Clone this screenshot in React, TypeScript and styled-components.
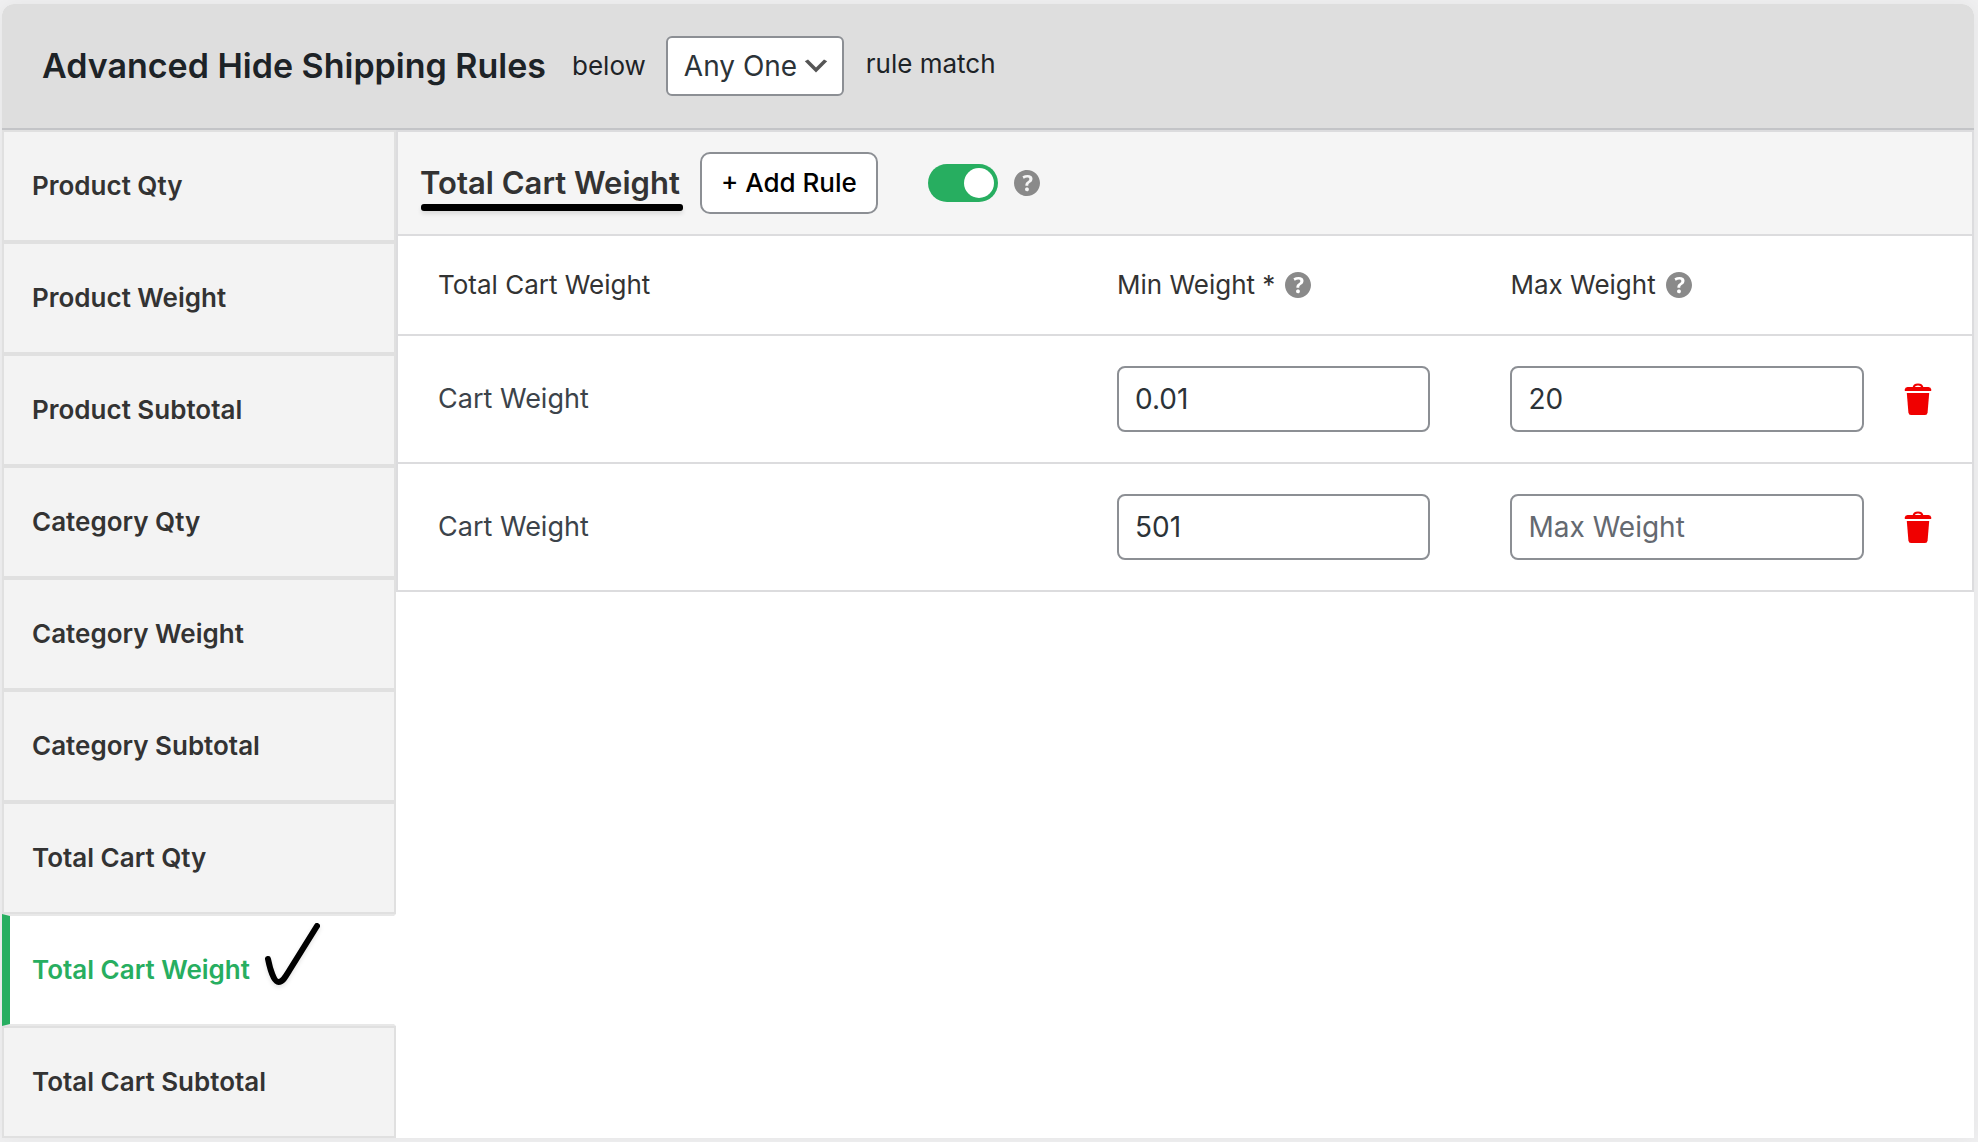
import React, { useState } from "react";
import styled, { createGlobalStyle, css } from "styled-components";

const color = {
  text: "#333333",
  ink: "#1d2327",
  field: "#2c3338",
  line: "#dcdcde",
  tabLine: "#e0e0e0",
  control: "#8c8f94",
  green: "#27ae60",
  red: "#f00000",
};

const GlobalStyle = createGlobalStyle`
  *, *::before, *::after { box-sizing: border-box; }
  body {
    margin: 0;
    background: #f0f0f1;
    color: ${color.text};
    font-family: Inter, "Liberation Sans", sans-serif;
    font-size: 26px;
    line-height: 36px;
  }
  button, input, select { font: inherit; margin: 0; }
`;

const Card = styled.section`
  margin: 4px 4px 4px 2px;
  background: #ffffff;
  border-radius: 12px 12px 0 0;
  box-shadow: 0 0 20px rgba(0, 0, 0, 0.05);
`;

const CardHeader = styled.header`
  display: flex;
  align-items: center;
  padding: 32px 40px;
  background: #dedede;
  border-bottom: 2px solid #c3c4c7;
  border-radius: 12px 12px 0 0;
  color: ${color.ink};
`;

const CardTitle = styled.h2`
  margin: 0 26px 0 0;
  font-size: 34px;
  font-weight: 600;
  line-height: 48px;
`;

const MatchGroup = styled.div`
  display: flex;
  align-items: flex-start;
  margin-left: 20px;
  gap: 22px;
  line-height: 56px;
`;

const SelectBox = styled.div`
  position: relative;
`;

const Select = styled.select`
  display: block;
  appearance: none;
  width: 178px;
  height: 60px;
  padding: 0 42px 0 16px;
  border: 2px solid ${color.control};
  border-radius: 6px;
  background: #ffffff;
  color: ${color.field};
  font-size: 28px;
`;

const Chevron = styled.svg`
  position: absolute;
  top: 14px;
  right: 12px;
  width: 32px;
  height: 32px;
  fill: #555555;
  pointer-events: none;
`;

const Body = styled.div`
  display: flex;
  align-items: flex-start;
`;

const Tabs = styled.nav`
  flex: 0 0 394px;
  display: flex;
  flex-direction: column;
`;

const Tab = styled.a<{ $active: boolean }>`
  position: relative;
  display: flex;
  align-items: center;
  height: 112px;
  padding-left: 28px;
  border: 2px solid ${color.tabLine};
  background: #f3f3f3;
  color: ${color.text};
  font-weight: 600;
  text-decoration: none;
  ${(p) =>
    p.$active &&
    css`
      padding-left: 22px;
      border-color: #e8e8e8;
      border-left: 8px solid ${color.green};
      border-right-color: #ffffff;
      background: #ffffff;
      color: ${color.green};
    `}
`;

const TabLabel = styled.span`
  position: relative;
`;

const Tick = styled.svg`
  position: absolute;
  left: calc(100% + 14px);
  bottom: 3px;
  width: 56px;
  height: 64px;
  fill: none;
  stroke: #000000;
  stroke-width: 6;
  stroke-linecap: round;
  stroke-linejoin: round;
  filter: drop-shadow(0 2px 2px rgba(0, 0, 0, 0.12));
`;

const Panel = styled.div`
  flex: 1;
  min-width: 0;
  border: 2px solid ${color.line};
`;

const PanelHeader = styled.div`
  display: flex;
  align-items: center;
  padding: 20px 22px;
  background: #f5f5f5;
  border-bottom: 2px solid ${color.line};
`;

const PanelTitle = styled.h3`
  position: relative;
  margin: 0 20px 0 0;
  font-size: 31px;
  font-weight: 600;
  line-height: 40px;

  &::after {
    content: "";
    position: absolute;
    left: 1px;
    right: -3px;
    bottom: -8px;
    height: 7px;
    border-radius: 3px;
    background: #000000;
    box-shadow: 0 3px 4px rgba(0, 0, 0, 0.1);
  }
`;

const AddButton = styled.button`
  width: 178px;
  height: 62px;
  padding: 0;
  border: 2px solid ${color.control};
  border-radius: 10px;
  background: #ffffff;
  color: #000000;
  font-weight: 500;
  white-space: nowrap;
`;

const Switch = styled.input`
  appearance: none;
  display: flex;
  width: 70px;
  height: 38px;
  margin: 0 16px 0 50px;
  padding: 4px;
  border-radius: 19px;
  background: #b4b9be;

  &::before {
    content: "";
    width: 30px;
    height: 30px;
    border-radius: 50%;
    background: #ffffff;
  }
  &:checked {
    justify-content: flex-end;
    background: ${color.green};
  }
`;

const HelpSvg = styled.svg`
  display: block;
  flex: none;
  width: 26px;
  height: 26px;
  fill: #8a8a8a;
`;

const Table = styled.table`
  width: 100%;
  table-layout: fixed;
  border-collapse: separate;
  border-spacing: 0;
`;

const Column = styled.col<{ $width?: string }>`
  width: ${(p) => p.$width ?? "auto"};
`;

const HeadCell = styled.th`
  height: 100px;
  padding: 0 0 0 40px;
  border-bottom: 2px solid ${color.line};
  font-weight: 400;
  text-align: left;
`;

const HeadLabel = styled.span`
  display: flex;
  align-items: center;
  gap: 10px;
`;

const Cell = styled.td<{ $end?: boolean }>`
  height: 126px;
  padding: 30px ${(p) => (p.$end ? 40 : 0)}px 30px 40px;
  color: #3c434a;
  font-size: 27px;

  tr:not(:last-child) > & {
    height: 128px;
    border-bottom: 2px solid ${color.line};
  }
`;

const Field = styled.input`
  display: block;
  width: 100%;
  height: 66px;
  padding: 0 16px;
  border: 2px solid ${color.control};
  border-radius: 8px;
  background: #ffffff;
  color: ${color.field};
  font-size: 28px;

  &::placeholder {
    color: #646970;
    opacity: 1;
  }
`;

const DeleteButton = styled.button`
  display: block;
  padding: 0;
  border: 0;
  background: none;
  color: ${color.red};
`;

const TrashSvg = styled.svg`
  display: block;
  width: 28px;
  height: 32px;
`;

const HelpIcon = () => (
  <HelpSvg viewBox="3 3 14 14" role="img" aria-label="Help">
    <path d="M17 10c0-3.87-3.14-7-7-7-3.87 0-7 3.13-7 7s3.13 7 7 7c3.86 0 7-3.13 7-7zM10.7 11.48H9.14v-.43c0-.38.08-.7.24-.98s.46-.57.88-.89c.41-.29.68-.53.81-.71.14-.18.2-.39.2-.62 0-.25-.09-.44-.28-.58-.19-.13-.45-.19-.79-.19-.58 0-1.25.19-2 .57l-.64-1.28c.87-.49 1.8-.74 2.77-.74.81 0 1.45.2 1.92.58.48.39.71.91.71 1.55 0 .43-.09.8-.29 1.11-.19.32-.57.67-1.11 1.06-.38.28-.61.49-.71.63-.1.15-.15.34-.15.57v.35zm-1.47 2.74c-.18-.17-.27-.42-.27-.73 0-.33.08-.58.26-.75s.43-.25.77-.25c.32 0 .57.09.75.26s.27.42.27.74c0 .3-.09.55-.27.72-.18.18-.43.27-.75.27-.33 0-.58-.09-.76-.26z" />
  </HelpSvg>
);

const TrashIcon = () => (
  <TrashSvg viewBox="0 0 28 32" aria-hidden="true">
    <path d="M9.5 5C10 .3 18 .3 18.500 5" fill="none" stroke="currentColor" strokeWidth="2" />
    <path d="M3.500 4h21Q27 4 27.200 6.500V8H.8V6.500Q1 4 3.500 4z" fill="currentColor" />
    <path d="M2.800 10h22.400L23.600 29.500Q23.300 32 21 32H7Q4.700 32 4.400 29.500z" fill="currentColor" />
  </TrashSvg>
);

const tabs = [
  "Product Qty",
  "Product Weight",
  "Product Subtotal",
  "Category Qty",
  "Category Weight",
  "Category Subtotal",
  "Total Cart Qty",
  "Total Cart Weight",
  "Total Cart Subtotal",
];
const activeTab = "Total Cart Weight";

const initialRules = [
  { id: 1, min: "0.01", max: "20" },
  { id: 2, min: "501", max: "" },
];

export default function App() {
  const [rules, setRules] = useState(initialRules);
  const [enabled, setEnabled] = useState(true);

  const addRule = () =>
    setRules((list) => [...list, { id: Date.now(), min: "", max: "" }]);
  const removeRule = (id: number) =>
    setRules((list) => list.filter((rule) => rule.id !== id));

  return (
    <>
      <GlobalStyle />
      <Card>
        <CardHeader>
          <CardTitle>Advanced Hide Shipping Rules</CardTitle>
          <label htmlFor="match">below</label>
          <MatchGroup>
            <SelectBox>
              <Select id="match" defaultValue="any">
                <option value="any">Any One</option>
                <option value="all">All</option>
              </Select>
              <Chevron viewBox="0 0 20 20" aria-hidden="true">
                <path d="M5 6l5 5 5-5 2 1-7 7-7-7 2-1z" />
              </Chevron>
            </SelectBox>
            <span>rule match</span>
          </MatchGroup>
        </CardHeader>
        <Body>
          <Tabs aria-label="Rule types">
            {tabs.map((name) => (
              <Tab key={name} href="#" $active={name === activeTab}>
                <TabLabel>
                  {name}
                  {name === activeTab && (
                    <Tick viewBox="0 0 56 64" aria-hidden="true">
                      <path d="M4 38C6 48 10 61 14.500 61C19 61 22 55 25 50L53 5" />
                    </Tick>
                  )}
                </TabLabel>
              </Tab>
            ))}
          </Tabs>
          <Panel>
            <PanelHeader>
              <PanelTitle>Total Cart Weight</PanelTitle>
              <AddButton type="button" onClick={addRule}>
                + Add Rule
              </AddButton>
              <Switch
                type="checkbox"
                aria-label="Enable total cart weight rules"
                checked={enabled}
                onChange={(e) => setEnabled(e.target.checked)}
              />
              <HelpIcon />
            </PanelHeader>
            <Table>
              <colgroup>
                <Column />
                <Column $width="25%" />
                <Column $width="25%" />
                <Column $width="108px" />
              </colgroup>
              <thead>
                <tr>
                  <HeadCell scope="col">Total Cart Weight</HeadCell>
                  <HeadCell scope="col">
                    <HeadLabel>
                      Min Weight * <HelpIcon />
                    </HeadLabel>
                  </HeadCell>
                  <HeadCell scope="col" colSpan={2}>
                    <HeadLabel>
                      Max Weight <HelpIcon />
                    </HeadLabel>
                  </HeadCell>
                </tr>
              </thead>
              <tbody>
                {rules.map((rule) => (
                  <tr key={rule.id}>
                    <Cell>Cart Weight</Cell>
                    <Cell $end>
                      <Field aria-label="Min Weight" placeholder="Min Weight" defaultValue={rule.min} />
                    </Cell>
                    <Cell>
                      <Field aria-label="Max Weight" placeholder="Max Weight" defaultValue={rule.max} />
                    </Cell>
                    <Cell>
                      <DeleteButton type="button" aria-label="Delete rule" onClick={() => removeRule(rule.id)}>
                        <TrashIcon />
                      </DeleteButton>
                    </Cell>
                  </tr>
                ))}
              </tbody>
            </Table>
          </Panel>
        </Body>
      </Card>
    </>
  );
}
